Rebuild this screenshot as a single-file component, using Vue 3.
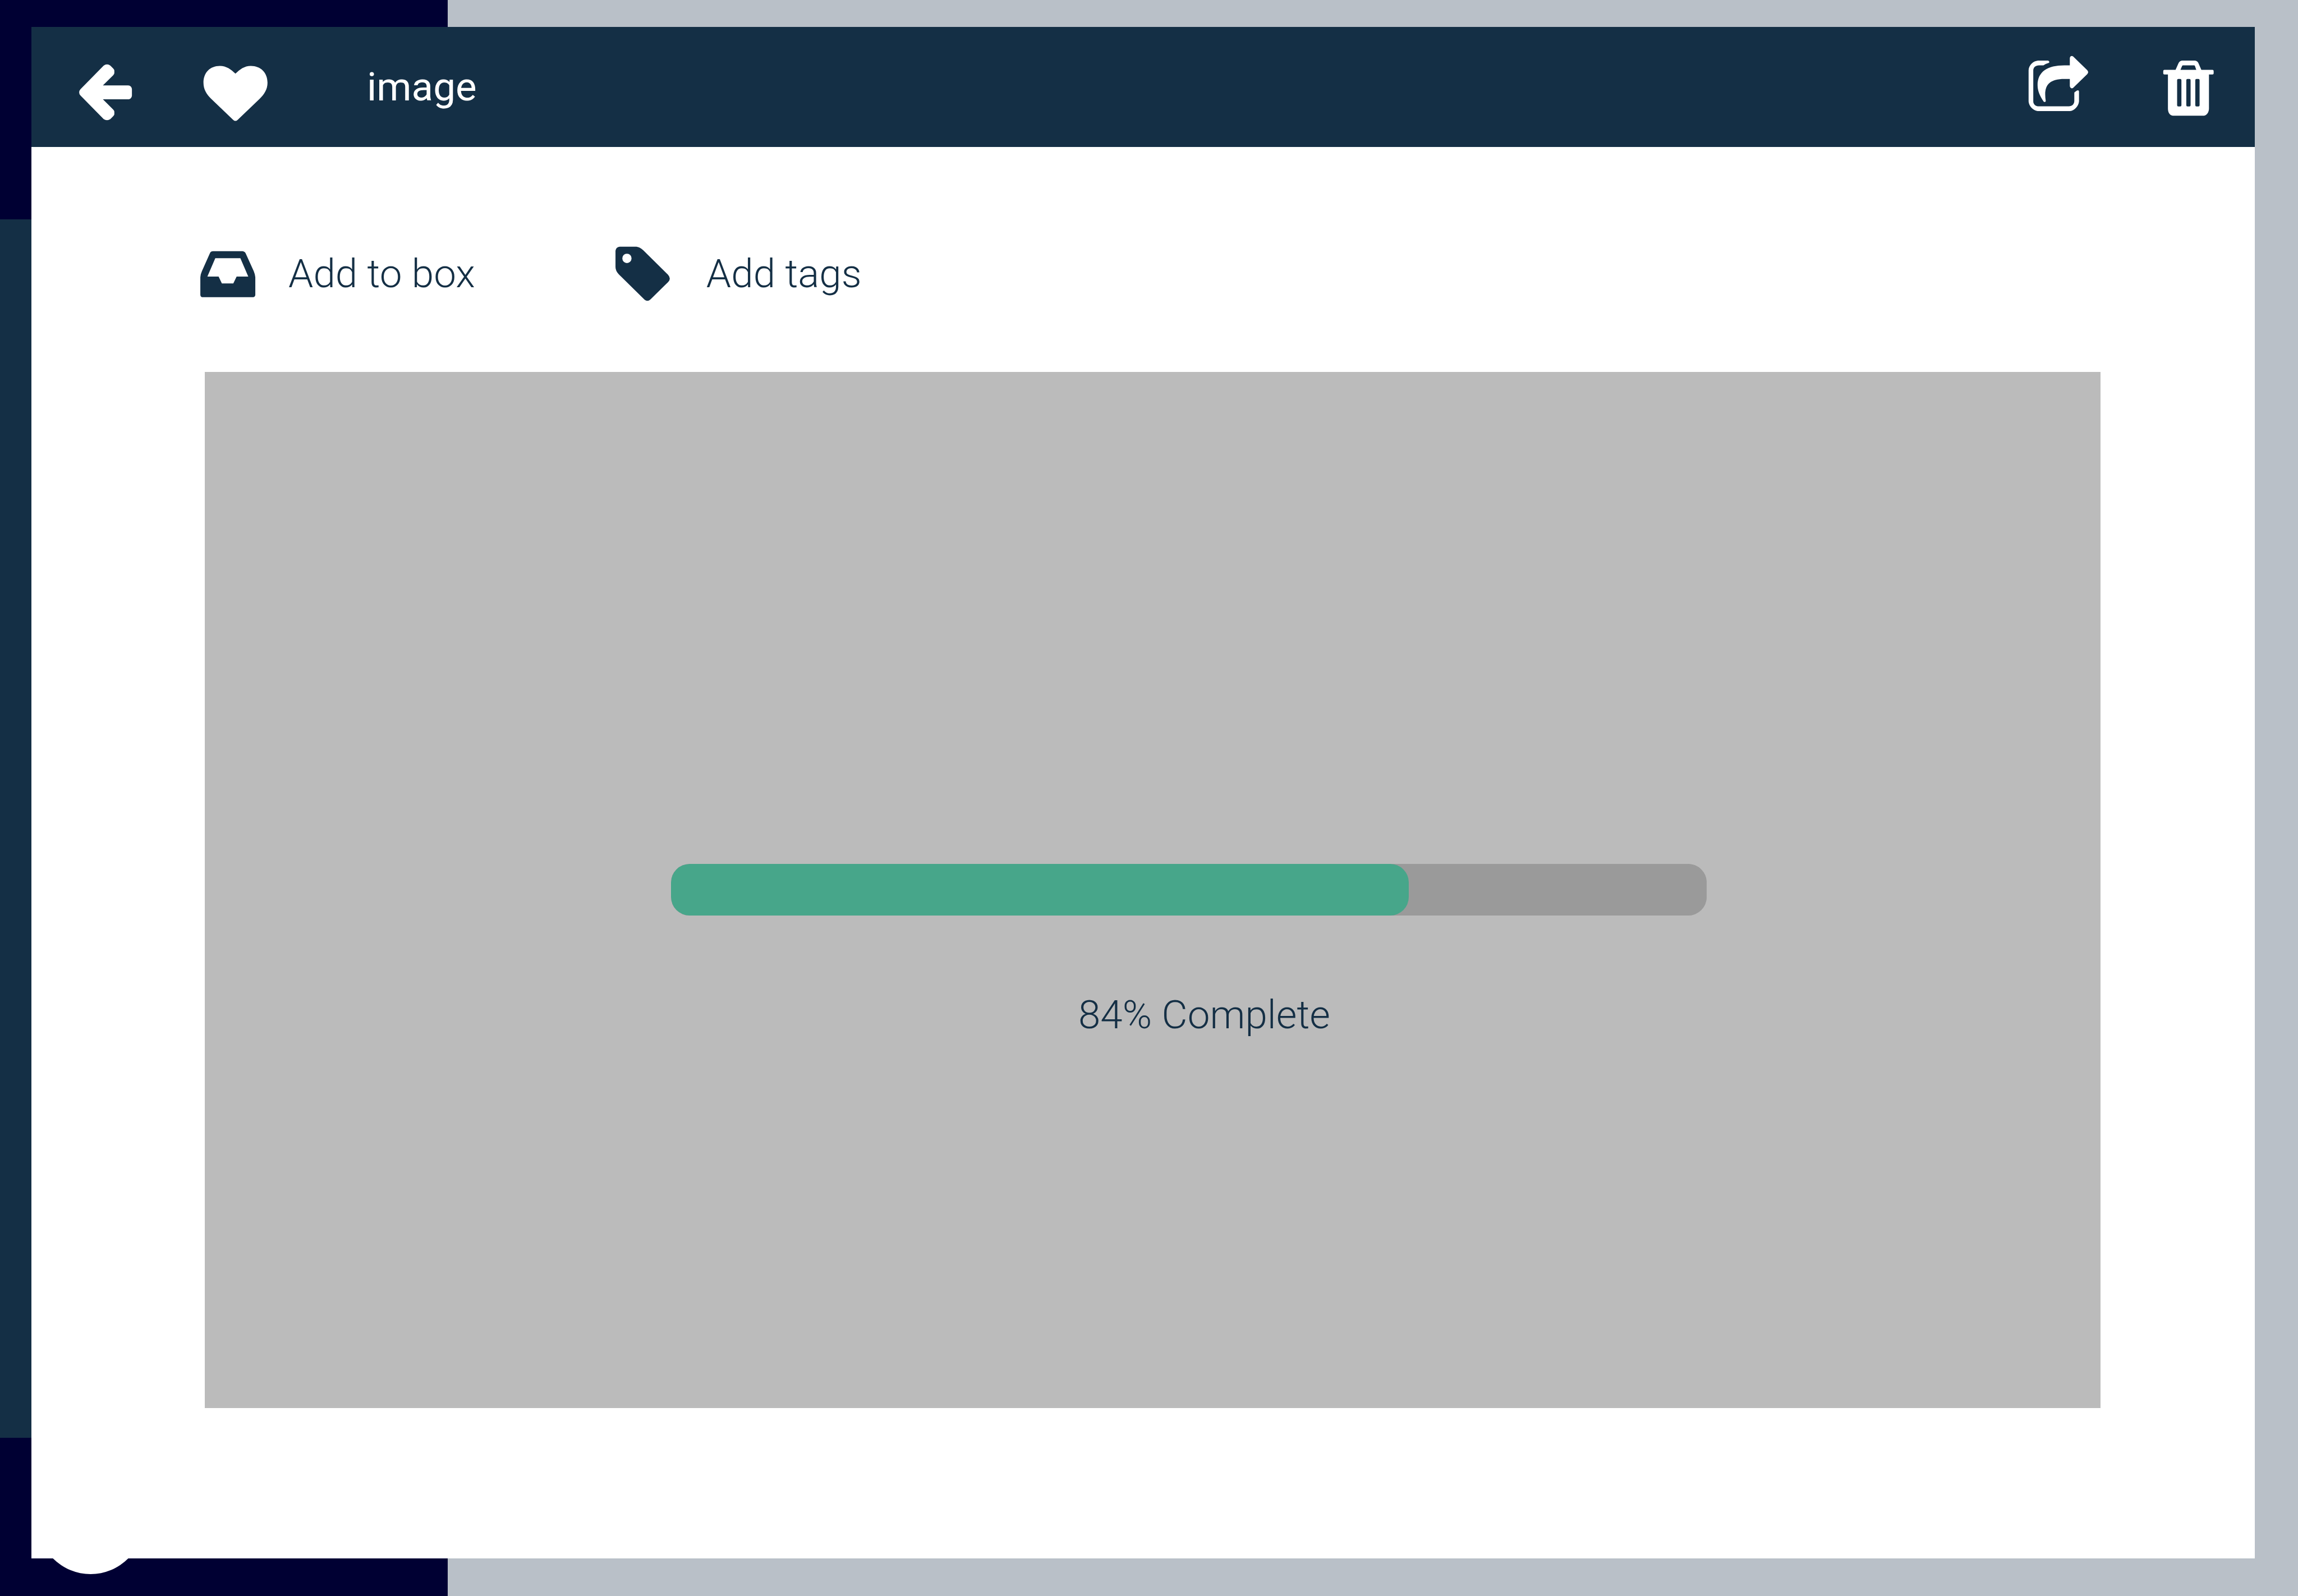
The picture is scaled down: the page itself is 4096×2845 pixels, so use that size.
<script setup>
import { ref } from 'vue'

const title = ref('image')
const percentLabel = ref(84)
const barValue = ref(71.25)
</script>

<template>
  <div class="app">
    <aside class="sidebar">
      <div class="sidebar-menu"></div>
      <div class="sidebar-footer">
        <span class="avatar"></span>
      </div>
    </aside>

    <main class="viewer">
      <header class="topbar">
        <div class="group">
          <button type="button" class="icon-button" aria-label="Back">
            <svg viewBox="56.5 10 490 562.5" preserveAspectRatio="none">
              <path d="M289 124Q312 104 335 124L354 146Q362 155 362 163V183Q362 190 354 200L284 279H457C470 279 482 294 482 308V358C482 374 470 388 457 388H284L354 468Q362 477 362 485V505Q362 511 354 521L335 543Q312 561 289 543L131 358Q122 348 122 334Q122 320 131 309Z" />
            </svg>
          </button>
          <button type="button" class="icon-button" aria-label="Favourite">
            <svg viewBox="944.5 10 490 562.5" preserveAspectRatio="none">
              <path d="M1188 187C1160 154 1125 126 1082 126C1015 126 970 178 970 258C970 310 992 350 1022 383L1173 549Q1188 566 1203 549L1354 383C1384 350 1407 310 1407 258C1407 178 1360 126 1293 126C1250 126 1217 154 1188 187Z" />
            </svg>
          </button>
        </div>
        <h1 class="title">{{ title }}</h1>
        <div class="group">
          <button type="button" class="icon-button" aria-label="Share">
            <svg viewBox="161 400 367.5 562.5" preserveAspectRatio="none">
              <path d="M240 475H292Q299 480 298 489Q297 492 292 495Q280 500 268 512H245C228 512 216 528 216 552V794C216 817 228 833 245 833H398C414 833 426 817 426 790V728Q426 723 430 720L439 710Q449 703 450 716V794C448 832 426 866 404 870H238C215 866 194 832 192 796V550C193 513 214 479 240 475Z" />
              <path d="M403 512V456Q404 440 414 439Q420 440 424 448L492 549Q497 557 497 566Q496 574 492 581L424 682Q419 692 413 692Q404 690 403 674V619H375C305 619 277 660 277 740Q277 765 280 792Q279 799 273 799Q270 799 268 793C250 752 238 712 238 668C238 560 290 512 375 512Z" />
            </svg>
          </button>
          <button type="button" class="icon-button" aria-label="Delete">
            <svg viewBox="824 400 367.5 562.5" preserveAspectRatio="none">
              <path fill-rule="evenodd" d="M878 557Q878 547 884 547H941L956 496C959 485 966 476 974 475H1040C1049 476 1055 485 1058 494L1073 547H1130Q1136 547 1136 557V575Q1136 584 1130 584H1112V850C1112 880 1100 904 1087 906H927C911 904 902 880 902 850V584H884Q878 584 878 575ZM966 547H1047L1040 517Q1039 512 1036 512H979Q976 512 975 515Z" />
              <g class="slots">
                <rect x="949" y="619" width="22" height="215" rx="6" ry="10" />
                <rect x="996" y="619" width="22" height="215" rx="6" ry="10" />
                <rect x="1042" y="619" width="22" height="215" rx="6" ry="10" />
              </g>
            </svg>
          </button>
        </div>
      </header>

      <nav class="actions">
        <button type="button" class="action">
          <svg viewBox="46.7 116 326.6 457" preserveAspectRatio="none" aria-hidden="true">
            <path fill-rule="evenodd" d="M133 168H267Q277 170 281 184L318 325Q324 350 325 372V510Q324 525 316 528H83Q76 525 75 510V372Q76 348 82 325L119 182Q123 168 133 168ZM143 223L107 367H158L173 420H225L240 367H293L257 223Z" />
          </svg>
          <span>Add to box</span>
        </button>
        <button type="button" class="action">
          <svg viewBox="66.5 116 326.6 457" preserveAspectRatio="none" aria-hidden="true">
            <path fill-rule="evenodd" d="M101 132H172C187 132 198 143 208 160L321 352Q329 368 329 383Q329 396 321 410L241 545Q228 566 215 549L97 349Q82 322 82 292V164Q84 136 101 132ZM134 187A21 37 0 0 0 134 261A21 37 0 0 0 134 187Z" />
          </svg>
          <span>Add tags</span>
        </button>
      </nav>

      <section class="preview">
        <progress id="upload" class="bar" max="100" :value="barValue"></progress>
        <label for="upload" class="status">{{ percentLabel }}% Complete</label>
      </section>
    </main>
  </div>
</template>

<style>
body {
  margin: 0;
}
</style>

<style scoped>
.app {
  --navy: #142f45;
  --midnight: #000033;
  position: relative;
  display: flex;
  min-height: 100vh;
  background: #b9c0c8;
  color: var(--navy);
  font-family: Roboto, "Liberation Sans", sans-serif;
  font-size: 71px;
  line-height: 84px;
}

.sidebar {
  display: flex;
  flex-direction: column;
  box-sizing: border-box;
  width: 798px;
  padding-top: 391px;
  background: var(--midnight);
}

.sidebar-menu {
  flex: 1;
  background: var(--navy);
}

.sidebar-footer {
  display: flex;
  padding: 54px 67px 39px;
}

.avatar {
  width: 189px;
  height: 189px;
  border-radius: 50%;
  background: #fff;
}

/* The viewer is a sheet laid over the library page. */
.viewer {
  position: absolute;
  inset: 48px 77px 67px 56px;
  display: flex;
  flex-direction: column;
  background: #fff;
}

.topbar {
  display: flex;
  align-items: center;
  height: 214px;
  padding: 0 54px 0 68px;
  background: var(--navy);
  color: #fff;
}

.group {
  display: flex;
  gap: 104px;
}

.title {
  flex: 1;
  margin: 0 0 0 170px;
  font-size: inherit;
  font-weight: 400;
}

button {
  margin: 0;
  padding: 0;
  border: 0;
  background: none;
  color: inherit;
  font: inherit;
  cursor: pointer;
}

svg {
  display: block;
  fill: currentColor;
}

.icon-button svg {
  width: 128px;
  height: 128px;
}

.slots {
  fill: var(--navy);
}

.actions {
  display: flex;
  gap: 244px;
  padding: 174px 290px 123px;
}

.action {
  display: flex;
  align-items: center;
  gap: 40px;
  font-weight: 300;
}

.action svg {
  width: 128px;
  height: 104px;
}

.preview {
  flex: 1;
  display: flex;
  flex-direction: column;
  align-items: center;
  margin: 0 275px 268px 309px;
  padding: 877px 0 0 128px;
  background: #bbb;
}

.bar {
  appearance: none;
  display: block;
  width: 1846px;
  max-width: 100%;
  height: 92px;
  border: 0;
  border-radius: 33px;
  overflow: hidden;
  background: #9a9a9a;
}

.bar::-webkit-progress-bar {
  border-radius: 33px;
  background: #9a9a9a;
}

.bar::-webkit-progress-value {
  border-radius: 33px;
  background: #47a68a;
}

.status {
  margin-top: 135px;
  padding-left: 56px;
  font-weight: 300;
}
</style>
